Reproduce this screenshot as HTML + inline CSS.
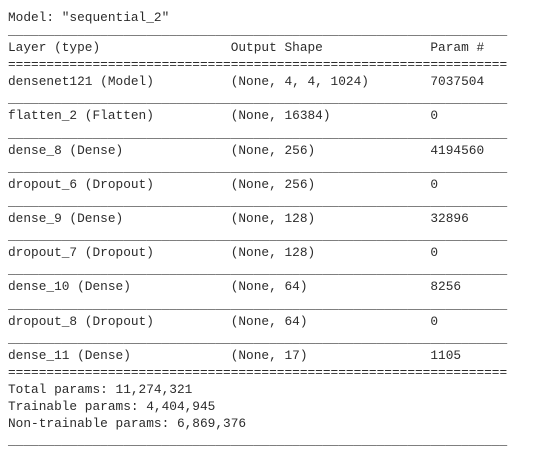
<!DOCTYPE html>
<html><head><meta charset="utf-8">
<style>
html,body{margin:0;padding:0;background:#fff;width:534px;height:463px;overflow:hidden}
pre{position:absolute;left:8px;margin:0;font-family:"Liberation Mono",monospace;font-size:12.8px;line-height:17.1px;color:#2b2b2b}
</style></head><body>
<pre style="top:9px">Model: "sequential_2"</pre>
<pre style="top:22px">_________________________________________________________________
Layer (type)                 Output Shape              Param #   
=================================================================
densenet121 (Model)          (None, 4, 4, 1024)        7037504   
_________________________________________________________________
flatten_2 (Flatten)          (None, 16384)             0         
_________________________________________________________________
dense_8 (Dense)              (None, 256)               4194560   
_________________________________________________________________
dropout_6 (Dropout)          (None, 256)               0         
_________________________________________________________________
dense_9 (Dense)              (None, 128)               32896     
_________________________________________________________________
dropout_7 (Dropout)          (None, 128)               0         
_________________________________________________________________
dense_10 (Dense)             (None, 64)                8256      
_________________________________________________________________
dropout_8 (Dropout)          (None, 64)                0         
_________________________________________________________________
dense_11 (Dense)             (None, 17)                1105      
=================================================================
Total params: 11,274,321
Trainable params: 4,404,945
Non-trainable params: 6,869,376
_________________________________________________________________</pre>
</body></html>
